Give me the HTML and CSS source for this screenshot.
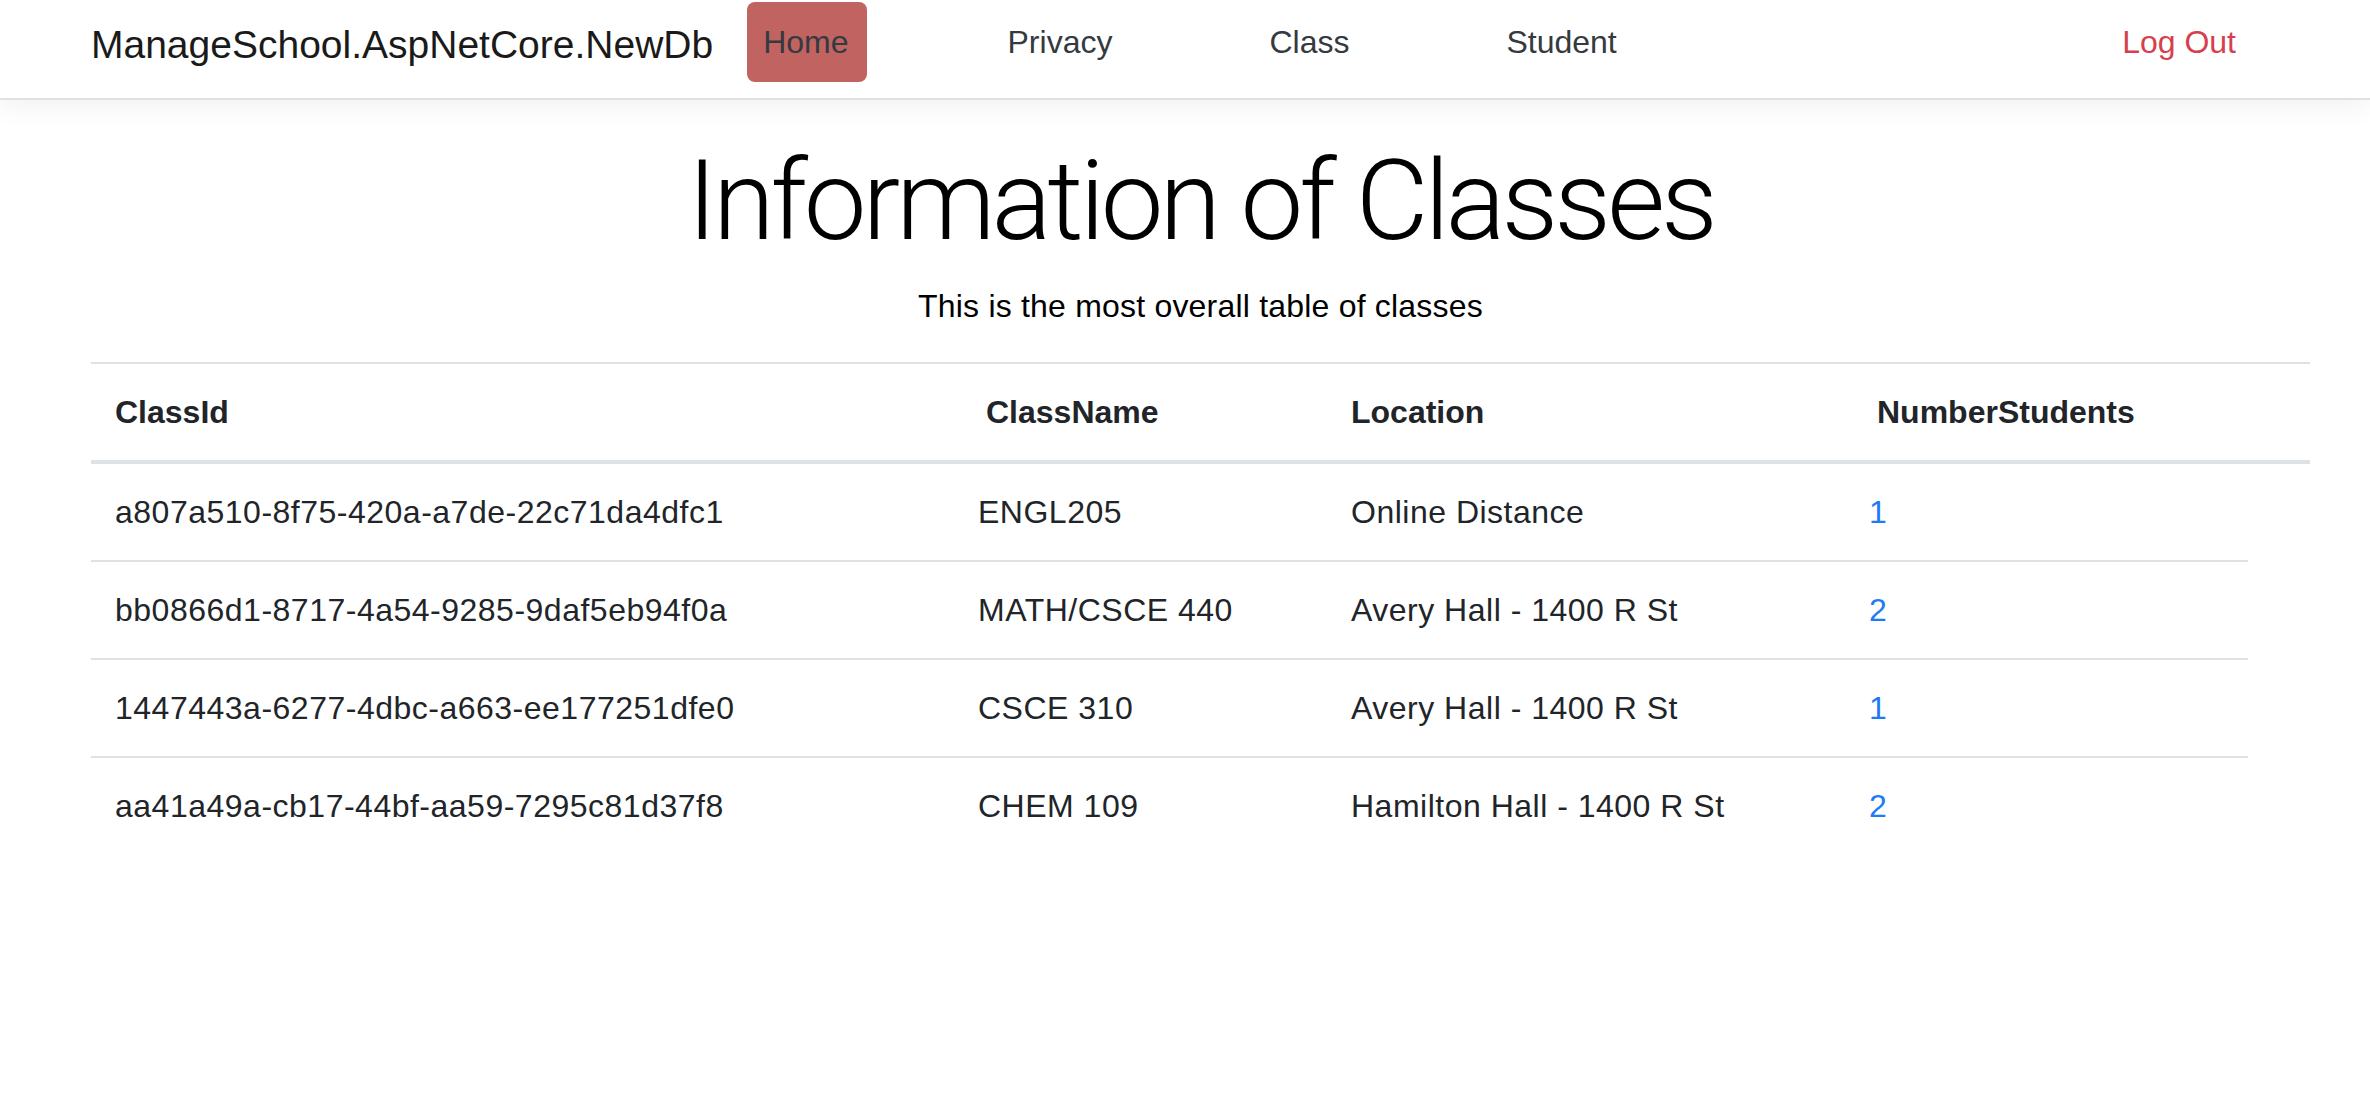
FILE: index.html
```html
<!DOCTYPE html>
<html lang="en">
<head>
<meta charset="utf-8">
<title>Classes - ManageSchool.AspNetCore.NewDb</title>
<link rel="stylesheet" href="styles.css">
</head>
<body>
<header class="navbar">
  <div class="nav-inner">
    <a class="brand" href="#">ManageSchool.AspNetCore.NewDb</a>
    <ul class="nav">
      <li><a class="nav-link active" href="#">Home</a></li>
      <li><a class="nav-link" href="#">Privacy</a></li>
      <li><a class="nav-link" href="#">Class</a></li>
      <li><a class="nav-link" href="#">Student</a></li>
    </ul>
    <a class="nav-link logout" href="#">Log Out</a>
  </div>
</header>
<main class="container">
  <div class="intro">
    <h1 class="title">Information of Classes</h1>
    <p class="lead">This is the most overall table of classes</p>
  </div>
  <table class="table">
    <thead>
      <tr>
        <th class="c-id">ClassId</th>
        <th class="c-name">ClassName</th>
        <th class="c-loc">Location</th>
        <th class="c-num">NumberStudents</th>
        <th class="c-extra"></th>
      </tr>
    </thead>
    <tbody>
      <tr>
        <td>a807a510-8f75-420a-a7de-22c71da4dfc1</td>
        <td>ENGL205</td>
        <td>Online Distance</td>
        <td class="num-cell"><a class="num" href="#">1</a></td>
      </tr>
      <tr>
        <td>bb0866d1-8717-4a54-9285-9daf5eb94f0a</td>
        <td>MATH/CSCE 440</td>
        <td>Avery Hall - 1400 R St</td>
        <td class="num-cell"><a class="num" href="#">2</a></td>
      </tr>
      <tr>
        <td>1447443a-6277-4dbc-a663-ee177251dfe0</td>
        <td>CSCE 310</td>
        <td>Avery Hall - 1400 R St</td>
        <td class="num-cell"><a class="num" href="#">1</a></td>
      </tr>
      <tr>
        <td>aa41a49a-cb17-44bf-aa59-7295c81d37f8</td>
        <td>CHEM 109</td>
        <td>Hamilton Hall - 1400 R St</td>
        <td class="num-cell"><a class="num" href="#">2</a></td>
      </tr>
    </tbody>
  </table>
</main>
</body>
</html>
```

FILE: styles.css
```css
html, body {
  margin: 0;
  padding: 0;
  background: #fff;
}

body {
  font-family: "Liberation Sans", Arial, sans-serif;
  font-size: 32px;
  line-height: 48px;
  color: #212529;
}

a {
  text-decoration: none;
}

/* ---------- navbar ---------- */
.navbar {
  height: 100px;
  box-sizing: border-box;
  border-bottom: 2px solid #dee2e6;
  box-shadow: 0 8px 24px rgba(0, 0, 0, 0.05);
  background: #fff;
}

.nav-inner {
  width: 2219px;
  margin-left: 91px;
  padding-top: 2px;
  display: flex;
  align-items: flex-start;
}

.brand {
  font-size: 39px;
  line-height: 60px;
  margin-top: 13px;
  margin-right: 34px;
  color: #1a1a1a;
  white-space: nowrap;
}

.nav {
  list-style: none;
  margin: 0;
  padding: 0;
  display: flex;
  gap: 125px;
}

.nav-link {
  display: block;
  padding: 16px;
  font-size: 32px;
  line-height: 48px;
  color: #343a40;
  border-radius: 8px;
}

.nav-link.active {
  background: #c16360;
  padding-right: 18px;
}

.logout {
  margin-left: auto;
  margin-right: 58px;
  color: #d63f4d;
}

/* ---------- content ---------- */
.container {
  width: 2219px;
  margin-left: 91px;
  margin-top: 32px;
}

.intro {
  text-align: center;
  color: #000;
}

.title {
  font-family: Roboto, "Liberation Sans", sans-serif;
  font-weight: 300;
  font-size: 112px;
  line-height: 134.4px;
  letter-spacing: -4px;
  margin: 0 0 16px;
  padding-top: 2px;
  height: 132.4px;
}

.lead {
  margin: 0 0 32px;
  font-size: 32px;
  line-height: 48px;
  letter-spacing: 0.2px;
}

/* ---------- table ---------- */
.table {
  width: 2219px;
  table-layout: fixed;
  border-collapse: separate;
  border-spacing: 0;
}

.table th,
.table td {
  padding: 24px;
  text-align: left;
  vertical-align: top;
  white-space: nowrap;
}

.table th {
  font-weight: 700;
  border-top: 2px solid #dee2e6;
  border-bottom: 4px solid #dee2e6;
  vertical-align: bottom;
}

.table td {
  letter-spacing: 0.5px;
}

.table td.num-cell {
  padding-left: 16px;
}

.table tbody tr + tr td {
  border-top: 2px solid #dee2e6;
}

.c-id { width: 815px; }
.c-name { width: 317px; padding-left: 32px !important; }
.c-loc { width: 478px; }
.c-num { width: 347px; }
.c-extra { width: 14px; }

.num {
  color: #1e7bf5;
}
```
